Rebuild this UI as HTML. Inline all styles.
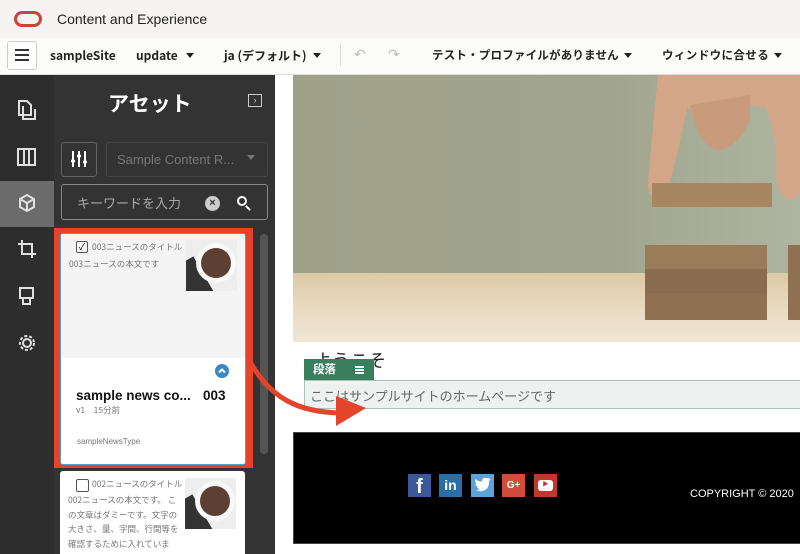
<!DOCTYPE html>
<html style="width:800px;height:554px;overflow:hidden"><head><meta charset="utf-8"><style>
*{box-sizing:border-box;margin:0;padding:0}
body{width:800px;height:554px;overflow:hidden;background:#fff;font-family:"Liberation Sans","Noto Sans CJK JP",sans-serif;position:relative}
.abs{position:absolute}
.jp{font-family:"Noto Sans CJK JP","Liberation Sans",sans-serif}
.tri{display:inline-block;width:0;height:0;border-left:4px solid transparent;border-right:4px solid transparent;border-top:5px solid #222;vertical-align:middle}
</style></head><body>
<div class="abs" style="left:0;top:0;width:800px;height:38px;background:#f5f4f2"></div>
<div class="abs" style="left:14px;top:11px;width:28px;height:16px;border:3px solid #c74634;border-radius:8px"></div>
<div class="abs" style="left:57px;top:11px;font-size:14px;color:#222">Content and Experience</div>
<div class="abs" style="left:0;top:38px;width:800px;height:37px;background:#fbfbfa;border-bottom:1px solid #ddd"></div>
<div class="abs" style="left:7px;top:41px;width:30px;height:29px;border:1px solid #ccc;border-radius:3px;background:#fff"></div>
<div class="abs" style="left:15px;top:49px;width:14px;height:2px;background:#333;box-shadow:0 5px 0 #333,0 10px 0 #333"></div>
<div class="abs jp" style="left:50px;top:47px;font-size:12px;font-weight:bold;color:#222;white-space:nowrap">sampleSite</div>
<div class="abs jp" style="left:136px;top:47px;font-size:12px;font-weight:bold;color:#222">update</div>
<div class="abs" style="left:186px;top:47px"><span class="tri"></span></div>
<div class="abs jp" style="left:224px;top:47px;font-size:12px;font-weight:bold;color:#222;white-space:nowrap">ja (デフォルト)</div>
<div class="abs" style="left:313px;top:47px"><span class="tri"></span></div>
<div class="abs" style="left:340px;top:44px;width:1px;height:22px;background:#ddd"></div>
<div class="abs" style="left:354px;top:46px;font-size:14px;color:#bbb">↶</div>
<div class="abs" style="left:388px;top:46px;font-size:14px;color:#bbb">↷</div>
<div class="abs jp" style="left:432px;top:47px;font-size:11.5px;font-weight:bold;color:#222;white-space:nowrap;letter-spacing:0.2px">テスト・プロファイルがありません</div>
<div class="abs" style="left:624px;top:47px"><span class="tri"></span></div>
<div class="abs jp" style="left:662px;top:47px;font-size:11.5px;font-weight:bold;color:#222;white-space:nowrap;letter-spacing:0.4px">ウィンドウに合せる</div>
<div class="abs" style="left:774px;top:47px"><span class="tri"></span></div>

<div class="abs" style="left:0;top:75px;width:54px;height:479px;background:#2d2d2d"></div>
<div class="abs" style="left:0;top:181px;width:54px;height:46px;background:#6b6b6b"></div>
<svg class="abs" style="left:0;top:75px" width="54" height="290" fill="none" stroke="#e0e0e0" stroke-width="2">
<path d="M19 26h8l4 4v10h-12z M23 31v13h12v-10"/>
<rect x="18" y="74" width="17" height="16"/><path d="M24 74v16M29 74v16"/>
<path d="M27 120l-7 4v8l7 4 7-4v-8z M20 124l7 4 7-4 M27 128v8"/>
<path d="M22 165v14h14 M18 169h14v14"/>
<path d="M20 213h13v10h-13z M23 223v6h7v-6"/>
<circle cx="27" cy="268" r="4"/><circle cx="27" cy="268" r="7" stroke-dasharray="3 2"/>
</svg>

<div class="abs" style="left:54px;top:75px;width:221px;height:479px;background:#333"></div>
<div class="abs jp" style="left:108px;top:88px;font-size:21px;font-weight:bold;color:#fff">アセット</div>
<div class="abs" style="left:248px;top:94px;width:14px;height:13px;border:1.5px solid #ccc;color:#ccc;font-size:9px;line-height:10px;text-align:center">›</div>
<div class="abs" style="left:61px;top:142px;width:36px;height:35px;border:1px solid #666;border-radius:3px"></div>
<svg class="abs" style="left:70px;top:150px" width="18" height="18" stroke="#fff" stroke-width="2"><path d="M3 1v16M9 1v16M15 1v16"/><path d="M1 11h4M7 6h4M13 12h4" stroke-width="2.5"/></svg>
<div class="abs" style="left:106px;top:142px;width:162px;height:35px;border:1px solid #444;border-radius:3px;color:#777;font-size:13px;padding:9px 0 0 10px;white-space:nowrap">Sample Content R...</div>
<div class="abs" style="left:247px;top:149px"><span class="tri" style="border-top-color:#777"></span></div>
<div class="abs" style="left:61px;top:184px;width:207px;height:36px;border:1px solid #888;border-radius:3px"></div>
<div class="abs jp" style="left:77px;top:193px;font-size:13px;color:#aaa">キーワードを入力</div>
<div class="abs" style="left:205px;top:196px;width:15px;height:15px;border-radius:50%;background:#ccc;color:#333;font-size:11px;text-align:center;line-height:15px;font-weight:bold">×</div>
<div class="abs" style="left:237px;top:196px;width:10px;height:10px;border:2px solid #fff;border-radius:50%"></div>
<div class="abs" style="left:245px;top:207px;width:6px;height:2px;background:#fff;transform:rotate(45deg)"></div>
<div class="abs" style="left:260px;top:234px;width:8px;height:220px;background:#555;border-radius:4px"></div>

<div class="abs" style="left:54px;top:228px;width:199px;height:240px;background:#e5432a"></div>
<div class="abs" style="left:60px;top:233px;width:186px;height:232px;background:#fff;border:1px solid #5a9fc8;border-radius:3px;overflow:hidden">
 <div style="height:124px;background:#f4f4f4"></div>
</div>
<div class="abs" style="left:76px;top:241px;width:12px;height:12px;border:1px solid #555;border-radius:2px;font-size:9px;line-height:10px;text-align:center">✓</div>
<div class="abs jp" style="left:92px;top:241px;font-size:8.5px;color:#777">003ニュースのタイトル</div>
<div class="abs jp" style="left:69px;top:258px;font-size:8.5px;color:#777">003ニュースの本文です</div>
<div class="abs" style="left:186px;top:240px;width:51px;height:51px;background:#eee;overflow:hidden"><div style="position:absolute;left:-6px;top:20px;width:25px;height:40px;background:#333;transform:rotate(-30deg)"></div><div style="position:absolute;left:10px;top:3px;width:40px;height:40px;border-radius:50%;background:#f8f8f8"></div><div style="position:absolute;left:15px;top:8px;width:30px;height:30px;border-radius:50%;background:#5c4034"></div></div>
<div class="abs" style="left:215px;top:364px;width:14px;height:14px;border-radius:50%;background:#3a88c4"></div>
<svg class="abs" style="left:215px;top:364px" width="14" height="14"><path d="M4 8.5l3-3 3 3" stroke="#fff" stroke-width="2" fill="none"/></svg>
<div class="abs" style="left:76px;top:388px;font-size:13.5px;font-weight:bold;color:#111;white-space:nowrap">sample news co...</div>
<div class="abs" style="left:203px;top:388px;font-size:13.5px;font-weight:bold;color:#111">003</div>
<div class="abs jp" style="left:76px;top:404px;font-size:8.5px;color:#777">v1　15分前</div>
<div class="abs" style="left:77px;top:437px;font-size:8px;color:#777">sampleNewsType</div>

<div class="abs" style="left:60px;top:471px;width:185px;height:83px;background:#fff;border-radius:3px 3px 0 0;overflow:hidden">
<div class="abs" style="left:16px;top:8px;width:13px;height:13px;border:1px solid #555;border-radius:2px"></div>
<div class="abs jp" style="left:32px;top:7px;font-size:8.5px;color:#777;white-space:nowrap">002ニュースのタイトル</div>
<div class="abs jp" style="left:8px;top:22px;width:112px;font-size:8.5px;line-height:14.5px;color:#777">002ニュースの本文です。 この文章はダミーです。文字の大きさ、量、字間、行間等を確認するために入れていま</div>
<div class="abs" style="left:125px;top:7px;width:51px;height:51px;background:#eee;overflow:hidden"><div style="position:absolute;left:-6px;top:20px;width:25px;height:40px;background:#333;transform:rotate(-30deg)"></div><div style="position:absolute;left:10px;top:3px;width:40px;height:40px;border-radius:50%;background:#f8f8f8"></div><div style="position:absolute;left:15px;top:8px;width:30px;height:30px;border-radius:50%;background:#5c4034"></div></div>
</div>

<div class="abs" style="left:275px;top:75px;width:18px;height:479px;background:#fff"></div>
<div class="abs" style="left:293px;top:75px;width:507px;height:198px;background:linear-gradient(90deg,#9fa189 0%,#a1a48c 60%,#adb5a0 100%)"></div>
<div class="abs" style="left:293px;top:273px;width:507px;height:69px;background:linear-gradient(180deg,#dcc9a4,#e8dac0 50%,#efe6d4)"></div>
<svg class="abs" style="left:630px;top:75px" width="170" height="130" fill="#d4a689">
<path d="M28 0 H170 V30 Q140 35 120 30 Q100 40 90 35 Q70 30 60 35 Z"/>
<path d="M28 0 Q22 60 18 108 Q17 122 27 122 Q37 122 40 108 L56 40 Q60 20 60 0 Z"/>
<path d="M120 0 Q150 50 146 100 Q148 124 162 124 Q170 124 170 110 V0 Z"/>
<path d="M60 30 Q70 75 90 75 Q110 70 120 45 L120 20 Z" fill="#c99a7c"/>
</svg>
<div class="abs" style="left:652px;top:183px;width:120px;height:24px;background:#a98662"></div>
<div class="abs" style="left:645px;top:245px;width:122px;height:75px;background:#8f7152;box-shadow:inset 0 24px 0 #9a7b5a,inset 0 48px 0 #8a6d50"></div>
<div class="abs" style="left:788px;top:245px;width:12px;height:75px;background:#8f7152"></div>

<div class="abs jp" style="left:314px;top:347px;font-size:18px;color:#222">ようこそ</div>
<div class="abs" style="left:304px;top:359px;width:70px;height:21px;background:#3a7f5d"></div>
<div class="abs jp" style="left:313px;top:361px;font-size:11.5px;font-weight:bold;color:#fff">段落</div>
<div class="abs" style="left:355px;top:366px;width:9px;height:1.5px;background:#fff;box-shadow:0 3px 0 #fff,0 6px 0 #fff"></div>
<div class="abs" style="left:304px;top:380px;width:496px;height:29px;background:#edf1ef;border:1.5px solid #a9c5b8;border-right:0"></div>
<div class="abs jp" style="left:310px;top:386px;font-size:13px;color:#666">ここはサンプルサイトのホームページです</div>

<svg class="abs" style="left:240px;top:350px" width="130" height="80"><path d="M8 8 C30 50 60 62 100 63" stroke="#e5432a" stroke-width="5" fill="none"/><polygon points="96,46 126,58 96,76" fill="#e5432a"/></svg>

<div class="abs" style="left:293px;top:432px;width:507px;height:112px;background:#000;border:1px solid #444;border-right:0"></div>
<div class="abs" style="left:408px;top:474px;width:23px;height:23px;background:#3b5998;color:#fff;font-weight:bold;font-size:20px;text-align:center;line-height:26px">f</div>
<div class="abs" style="left:439px;top:474px;width:23px;height:23px;background:#2a6ea8;color:#fff;font-weight:bold;font-size:14px;text-align:center;line-height:23px">in</div>
<div class="abs" style="left:471px;top:474px;width:23px;height:23px;background:#5aa3dc"></div>
<svg class="abs" style="left:474px;top:478px" width="17" height="15"><path d="M1 12c4 2 10 2 13-3 1-2 1-4 1-6l2-2-2 .5 1-2-2 1c-2-2-6-1-6 3C5 3.5 3 2.5 1.5 1c-1 2 0 4 1.5 5L1.5 5.5c0 2 1 3 3 3.5H3c.5 1.5 2 2 3 2-1.5 1-3 1.5-5 1z" fill="#fff"/></svg>
<div class="abs" style="left:502px;top:474px;width:23px;height:23px;background:#d34c3b;color:#fff;font-weight:bold;font-size:10px;text-align:center;line-height:23px">G+</div>
<div class="abs" style="left:534px;top:474px;width:23px;height:23px;background:#c2362e"><div style="margin:6px 4px;width:15px;height:11px;background:#fff;border-radius:3px;color:#c2362e;font-size:6px;text-align:center;line-height:11px">▶</div></div>
<div class="abs" style="left:690px;top:488px;font-size:11px;color:#fff;white-space:nowrap">COPYRIGHT © 2020</div>
</body></html>
